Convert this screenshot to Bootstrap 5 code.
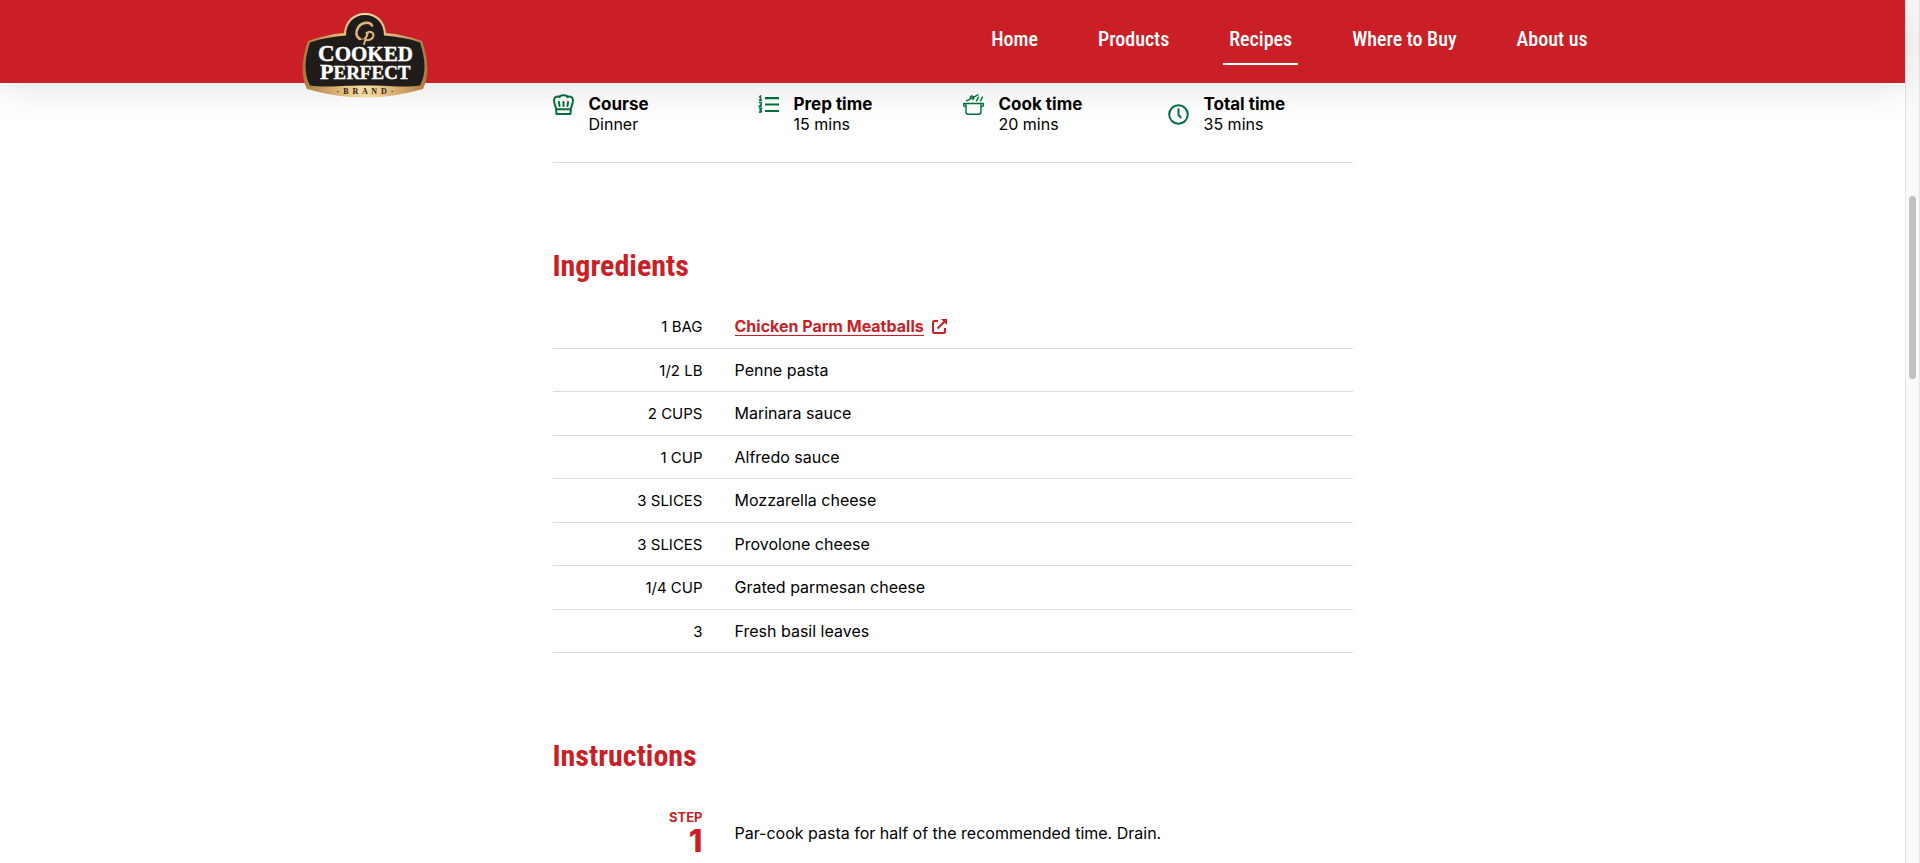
<!DOCTYPE html>
<html lang="en">
<head>
<meta charset="utf-8">
<meta name="viewport" content="width=device-width, initial-scale=1">
<title>Recipe | Cooked Perfect</title>
<link href="https://cdn.jsdelivr.net/npm/bootstrap@5.3.0/dist/css/bootstrap.min.css" rel="stylesheet">
<style>
  :root { --brand-red: #ca1f27; --brand-green: #00703c; --rule: #dcdcdc; --display: "Roboto Condensed", "Open Sans Condensed", Roboto, sans-serif; }
  body { font-family: Inter, "Open Sans", sans-serif; font-size: 16px; line-height: 20px; color: #000; background: #fff; }
  .site-header { height: 83px; background: var(--brand-red); box-shadow: 0 4px 40px rgba(0, 0, 0, .12); }
  .header-inner { max-width: 1302px; padding-right: 10px; }
  .brand-logo { margin-top: 11px; width: 126px; height: 88px; }
  .site-nav { gap: 48px; margin-top: 22px; }
  .site-nav .nav-link { padding: 0 6px 6px; font: 500 20px/35px var(--display); color: #fff; border-bottom: 2px solid transparent; }
  .site-nav .nav-link.active { border-color: #fff; }
  .recipe { max-width: 800px; }
  .facts { grid-template-columns: repeat(4, 1fr); column-gap: 20px; padding: 11px 0 28px; border-bottom: 1px solid var(--rule); }
  .facts svg { width: 21px; height: 21px; color: var(--brand-green); }
  .facts dt { font-size: 17px; font-weight: 700; }
  .facts dt, .facts dd { line-height: 20px; }
  .facts > div { gap: 15px; }
  .section-title { font: 700 30px/40px var(--display); color: var(--brand-red); }
  .ingredients-block, .instructions-block { padding-top: 83px; }
  .ingredients { height: 348px; margin-top: 19px; border-collapse: separate; border-spacing: 0; }
  .ingredients th, .ingredients td { border-bottom: 1px solid var(--rule); vertical-align: middle; padding: 0; }
  .ingredients th { width: 150px; padding-top: 2px; font-size: 15px; font-weight: 400; text-align: right; text-transform: uppercase; }
  .ingredients td { padding-left: 32px; }
  .product-link { color: var(--brand-red); font-weight: 700; text-decoration: none; }
  .product-link span { border-bottom: 1px solid; line-height: 18px; }
  .step { gap: 32px; margin-top: 33px; }
  .step-no { width: 150px; color: var(--brand-red); font-weight: 700; font-size: 13px; line-height: 16px; }
  .step-no strong { font-size: 31px; line-height: 32px; font-weight: 800; }
  .scroll-track { width: 15px; padding: 196px 3px 0; background: #fafafa; border-left: 1px solid #e6e6e6; border-right: 1px solid #e6e6e6; }
  .scroll-thumb { height: 183px; border-radius: 4px; background: #c1c1c1; }
</style>
</head>
<body>
<div class="d-flex vh-100 overflow-hidden">
  <div class="flex-fill">
    <header class="site-header position-relative">
      <div class="header-inner mx-auto d-flex justify-content-between align-items-start">
        <a href="#" aria-label="Cooked Perfect home">
          <svg class="brand-logo d-block" viewBox="0 0 126 88">
            <defs>
              <linearGradient id="gold" x1="0" x2="1" y1="0" y2="0">
                <stop offset="0" stop-color="#a9773f"/><stop offset=".25" stop-color="#d9ae70"/><stop offset=".5" stop-color="#f6dfa8"/><stop offset=".75" stop-color="#d9ae70"/><stop offset="1" stop-color="#a9773f"/>
              </linearGradient>
            </defs>
            <path fill="url(#gold)" d="M42 22C43 10 51 2 63 2s20 8 21 20c13 1 25 4 36 8 7 20 7 36 1 48-18 5-38 8.500-58 8.500S23 83 5 78C-1 66-1 50 6 30c11-4 23-7 36-8Z"/>
            <path fill="#1f1c19" d="M44 24.500C44 12 52 4 63 4s19 8 19 20.500c13 1 25 3 36 7 6 18 6 32 0 43C103 77 90 74.500 63 74.500S23 77 8 74.500C2 63.500 2 49.500 8 31.500c11-4 23-6 36-7Z"/>
            <g fill="none" stroke="#dfb37a" stroke-linecap="round">
              <path stroke-width="2.600" d="M70 14.500C68 10.500 60 11 56.500 16S54 26 58 28"/>
              <path stroke-width="1" d="M58 28c4 1 8-1 8-6"/>
              <path stroke-width="2" d="M64.500 22C68 19 73 22 71 26s-8 4-8 1M65.500 22 62 33"/>
            </g>
            <g fill="#fff" font-family="Liberation Serif, serif" font-weight="700" stroke="#fff" stroke-width=".4">
              <text x="16" y="50" font-size="23">C<tspan font-size="21">OOKED</tspan></text>
              <text x="18" y="68" font-size="22">P<tspan font-size="19">ERFECT</tspan></text>
            </g>
            <text x="63" y="83" text-anchor="middle" fill="#2b211a" font-family="Liberation Serif, serif" font-weight="700" font-size="8" style="white-space: pre">·  B  R  A  N  D  ·</text>
          </svg>
        </a>
        <nav class="nav site-nav" aria-label="Main">
          <a class="nav-link" href="#">Home</a>
          <a class="nav-link" href="#">Products</a>
          <a class="nav-link active" href="#" aria-current="page">Recipes</a>
          <a class="nav-link" href="#">Where to Buy</a>
          <a class="nav-link" href="#">About us</a>
        </nav>
      </div>
    </header>

    <main class="recipe mx-auto">
      <dl class="facts d-grid mb-0">
        <div class="d-flex align-items-start">
          <svg viewBox="0 0 21 21" fill="none" stroke="currentColor" stroke-width="2" stroke-linejoin="round" stroke-linecap="round" aria-hidden="true"><path d="M3.500 20 3 14C1.500 10 .5 7 1.200 5 2 2.800 4.500 2 6.500 3 7.500.8 13.500.8 14.500 3c2-1 4.500-.2 5.300 2 .7 2-.3 5-1.800 9l-.5 6ZM3.200 15.200h14.600M6.500 12 6 8M10.500 12V8M14.500 12l.5-4"/></svg>
          <div><dt>Course</dt><dd class="mb-0">Dinner</dd></div>
        </div>
        <div class="d-flex align-items-start">
          <svg viewBox="0 0 21 21" fill="none" stroke="currentColor" aria-hidden="true"><path stroke-width="2.200" d="M7 4.200h14M7 10.500h14M7 17h14"/><path stroke-width="1.500" d="M1.200 3 2.500 2.200V6M1 6.200h3M1 8.600h2.300v1.600L1.300 12.400H4M1 14.600h2.400L2.200 16.400c2 0 1.600 2.200-1.200 1.800"/></svg>
          <div><dt>Prep time</dt><dd class="mb-0">15 mins</dd></div>
        </div>
        <div class="d-flex align-items-start">
          <svg viewBox="0 0 21 21" fill="none" stroke="currentColor" stroke-width="1.400" stroke-linejoin="round" stroke-linecap="round" aria-hidden="true"><path d="M.7 9.500h19.600M3 9.500v8.300c0 1.500.8 2.500 2.300 2.500h10.400c1.500 0 2.300-1 2.300-2.500V9.500M3 12.500H2c-1 0-1.300-.7-1.300-1.300V9.500M18 12.500h1c1 0 1.300-.7 1.300-1.300V9.500M3.500 6.800 15 .8M7.500 4.500C6.800 2.800 8 1.700 9.300 2.200s2 1.800.6 3.300M13.500 6.800l2-3.600M17.500 6.800l2-3.800"/></svg>
          <div><dt>Cook time</dt><dd class="mb-0">20 mins</dd></div>
        </div>
        <div class="d-flex align-items-center">
          <svg viewBox="0 0 21 21" fill="none" stroke="currentColor" stroke-width="2" stroke-linecap="round" stroke-linejoin="round" aria-hidden="true"><circle cx="10.500" cy="10.500" r="9.300"/><path d="M10.500 5.200v5.600l2.200 2.600"/></svg>
          <div><dt>Total time</dt><dd class="mb-0">35 mins</dd></div>
        </div>
      </dl>

      <section class="ingredients-block">
        <h2 class="section-title mb-0">Ingredients</h2>
        <table class="ingredients w-100">
          <tbody>
            <tr><th scope="row">1 bag</th><td><a class="product-link d-flex align-items-center gap-2" href="#"><span>Chicken Parm Meatballs</span><svg width="15" height="15" viewBox="0 0 15 15" fill="none" stroke="currentColor" stroke-width="2" aria-hidden="true"><path d="M6 2H2.500Q1 2 1 3.500v9Q1 14 2.500 14h9q1.500 0 1.500-1.500V9M5.500 9.500 13 2"/><path fill="currentColor" stroke="none" d="M9 0h6v6Z"/></svg></a></td></tr>
            <tr><th scope="row">1/2 lb</th><td>Penne pasta</td></tr>
            <tr><th scope="row">2 cups</th><td>Marinara sauce</td></tr>
            <tr><th scope="row">1 cup</th><td>Alfredo sauce</td></tr>
            <tr><th scope="row">3 slices</th><td>Mozzarella cheese</td></tr>
            <tr><th scope="row">3 slices</th><td>Provolone cheese</td></tr>
            <tr><th scope="row">1/4 cup</th><td>Grated parmesan cheese</td></tr>
            <tr><th scope="row">3</th><td>Fresh basil leaves</td></tr>
          </tbody>
        </table>
      </section>

      <section class="instructions-block">
        <h2 class="section-title mb-0">Instructions</h2>
        <div class="step d-flex align-items-center">
          <div class="step-no d-flex flex-column text-end"><span>STEP</span><strong>1</strong></div>
          <p class="mb-0">Par-cook pasta for half of the recommended time. Drain.</p>
        </div>
      </section>
    </main>
  </div>
  <div class="scroll-track flex-shrink-0" aria-hidden="true"><div class="scroll-thumb"></div></div>
</div>
<script src="https://cdn.jsdelivr.net/npm/bootstrap@5.3.0/dist/js/bootstrap.bundle.min.js"></script>
</body>
</html>
